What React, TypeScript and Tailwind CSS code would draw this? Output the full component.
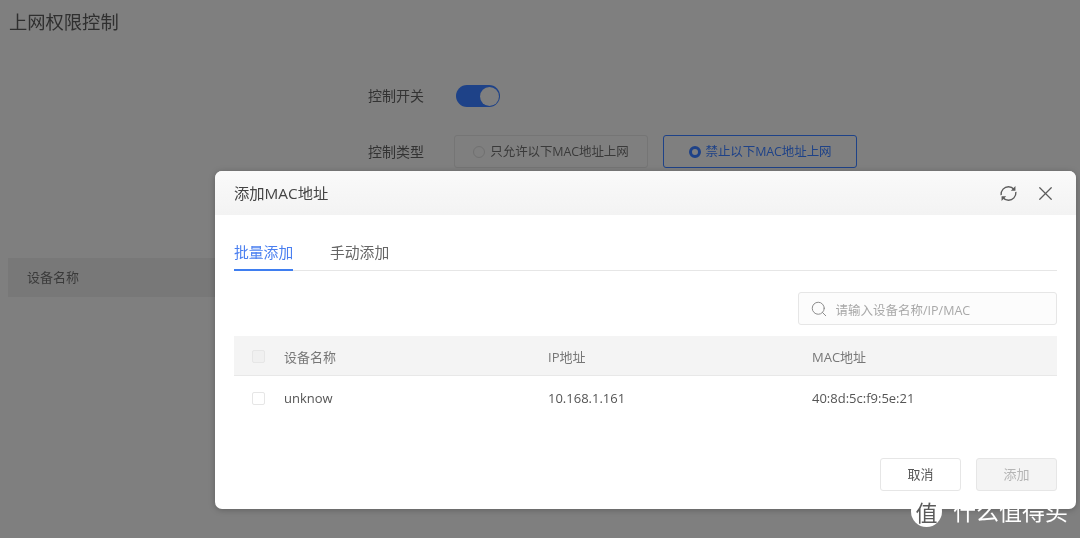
import { Search, X } from "lucide-react";

const font = "font-['Open_Sans','Noto_Sans_CJK_SC',sans-serif]";

function Checkbox({ muted }: { muted?: boolean }) {
  return <span className={`block h-[13px] w-[13px] rounded-[2px] border border-[#e6e6e6] ${muted ? "bg-[#f0f0f0]" : "bg-white"}`} />;
}

function RefreshIcon() {
  return (
    <svg width="19" height="19" viewBox="0 0 18 18" fill="none" stroke="currentColor" strokeWidth="1.3">
      <path d="M2 10.5C1.6 6 5 2.6 9 2.6c2.2 0 3.9.9 5 2.4" />
      <path d="M16 7.5c.4 4.500-3 7.900-7 7.900-2.200 0-3.900-.9-5-2.400" />
      <path d="M15.600 1.800v4.600h-4.400z" fill="currentColor" stroke="none" />
      <path d="M2.400 16.200v-4.600h4.400z" fill="currentColor" stroke="none" />
    </svg>
  );
}

function Watermark() {
  return (
    <div className="absolute right-[12px] bottom-[11px] flex items-center gap-[11px] text-white">
      <span className="flex h-[31px] w-[31px] items-center justify-center rounded-full bg-white text-[22px] leading-none text-[#5a5a5a]">值</span>
      <span className="text-[23px] leading-none">什么值得买</span>
    </div>
  );
}

export default function App() {
  return (
    <div className="h-[538px] w-[1080px] overflow-hidden bg-[#7f7f7f]">
      <div className={`${font} relative h-[538px] w-[1080px] bg-[#7f7f7f] blur-[0.35px]`}>
        {/* page behind the mask */}
        <div className="pt-[9px] pl-[9px] text-[18.300px] leading-[26px] text-[#2f2f2f]">上网权限控制</div>

        <div className="mt-[50px] flex h-[22px] items-center pl-[368px]">
          <span className="w-[88px] text-[14px] leading-[22px] text-[#333333]">控制开关</span>
          <span className="flex h-[22px] w-[44px] items-center justify-end rounded-full bg-[#1e4288] pr-[1.5px]">
            <span className="h-[19px] w-[19px] rounded-full bg-[#7f7f7f]" />
          </span>
        </div>

        <div className="mt-[28px] flex items-center pl-[368px]">
          <span className="w-[86px] text-[14px] leading-[22px] text-[#333333]">控制类型</span>
          <div className="flex h-[33px] w-[194px] items-center justify-center gap-[5px] rounded-[3px] border border-[#757575] pt-[1px] text-[12.5px] tracking-[-0.1px] text-[#3a3a3a]">
            <span className="h-[12px] w-[12px] rounded-full border border-[#707070]" />
            只允许以下MAC地址上网
          </div>
          <div className="ml-[15px] flex h-[33px] w-[194px] items-center justify-center gap-[5px] rounded-[3px] border border-[#1e4288] pt-[1px] text-[12.5px] tracking-[-0.1px] text-[#1e4288]">
            <span className="h-[12px] w-[12px] rounded-full border-[3.5px] border-[#1e4288] bg-[#7f7f7f]" />
            禁止以下MAC地址上网
          </div>
        </div>

        <div className="mt-[90px] ml-[8px] flex h-[39px] w-[300px] items-center bg-[#787878] pt-[1px] pl-[19px] text-[13px] text-[#3a3a3a]">设备名称</div>

        {/* dialog */}
        <div className="absolute top-[171px] left-[215px] flex h-[338px] w-[861px] flex-col rounded-[7px] bg-white shadow-[0_1px_6px_rgba(0,0,0,0.25)]">
          <div className="flex h-[44px] items-center justify-between rounded-t-[7px] bg-gradient-to-b from-[#fafafa] to-[#f3f3f3] pr-[19px] pl-[19px]">
            <span className="pt-[1px] text-[15.3px] text-[#444444]">添加MAC地址</span>
            <div className="flex items-center gap-[16px] text-[#5c5c5c]">
              <RefreshIcon />
              <X size={23} strokeWidth={1.3} />
            </div>
          </div>

          <div className="flex flex-1 flex-col px-[19px]">
            <div className="mt-[25px] flex h-[31px] gap-[37px] border-b border-[#e6e6e6] text-[14.8px] leading-[25px] whitespace-nowrap">
              <span className="h-[31px] w-[59px] border-b-2 border-[#3f7ef0] text-[#4a7ff0]">批量添加</span>
              <span className="text-[#666666]">手动添加</span>
            </div>

            <div className="mt-[21px] flex justify-end">
              <div className="flex h-[33px] w-[259px] items-center gap-[8px] rounded-[3px] border border-[#e6e6e6] bg-[#fcfcfc] pt-[1px] pl-[10.500px] text-[12.500px] text-[#a8a8a8]">
                <Search size={18} strokeWidth={1.3} className="-mt-[1px] text-[#8a8a8a]" />
                <span className="pt-[4px]">请输入设备名称/IP/MAC</span>
              </div>
            </div>

            <div className="mt-[11px] grid h-[40px] grid-cols-[50px_264px_264px_1fr] items-center border-b border-[#e8e8e8] bg-[#f4f4f4] text-[13px] text-[#777777]">
              <span className="pt-[2px] pl-[18px]"><Checkbox muted /></span>
              <span className="pt-[4px]">设备名称</span>
              <span className="pt-[4px]">IP地址</span>
              <span className="pt-[4px]">MAC地址</span>
            </div>
            <div className="grid h-[44px] grid-cols-[50px_264px_264px_1fr] items-center text-[13px] text-[#555555]">
              <span className="pl-[18px]"><Checkbox /></span>
              <span className="pt-[2px]">unknow</span>
              <span className="pt-[2px]">10.168.1.161</span>
              <span className="pt-[2px]">40:8d:5c:f9:5e:21</span>
            </div>

            <div className="mt-[38px] flex justify-end gap-[15px]">
              <button className="h-[33px] w-[81px] rounded-[3px] border border-[#e6e6e6] bg-white pt-[1px] text-[13px] text-[#555555]">取消</button>
              <button className="h-[33px] w-[81px] rounded-[3px] border border-[#e6e6e6] bg-[#f4f4f4] pt-[1px] text-[13px] text-[#b5b5b5]">添加</button>
            </div>
          </div>
        </div>

        <Watermark />
      </div>
    </div>
  );
}
